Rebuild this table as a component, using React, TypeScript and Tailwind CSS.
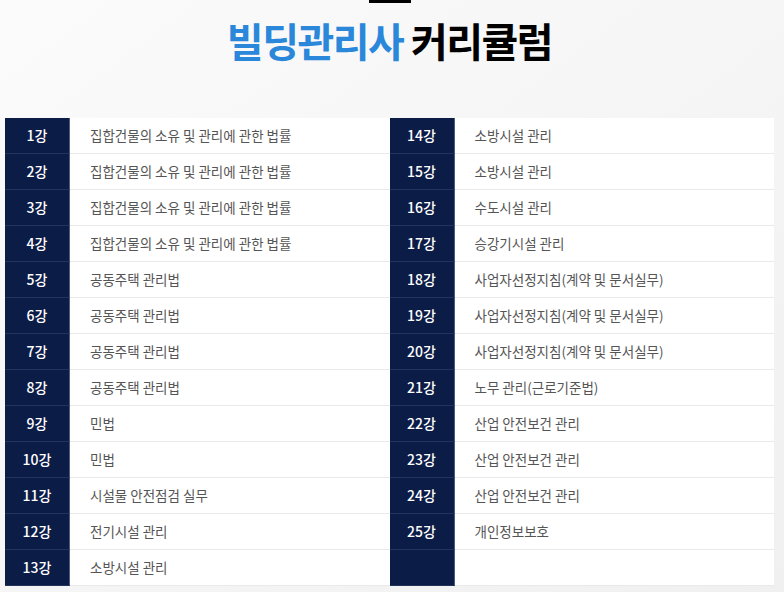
const left = [
  '집합건물의 소유 및 관리에 관한 법률',
  '집합건물의 소유 및 관리에 관한 법률',
  '집합건물의 소유 및 관리에 관한 법률',
  '집합건물의 소유 및 관리에 관한 법률',
  '공동주택 관리법',
  '공동주택 관리법',
  '공동주택 관리법',
  '공동주택 관리법',
  '민법',
  '민법',
  '시설물 안전점검 실무',
  '전기시설 관리',
  '소방시설 관리',
]

const right = [
  '소방시설 관리',
  '소방시설 관리',
  '수도시설 관리',
  '승강기시설 관리',
  '사업자선정지침(계약 및 문서실무)',
  '사업자선정지침(계약 및 문서실무)',
  '사업자선정지침(계약 및 문서실무)',
  '노무 관리(근로기준법)',
  '산업 안전보건 관리',
  '산업 안전보건 관리',
  '산업 안전보건 관리',
  '개인정보보호',
  '',
]

function Column({ items, start }: { items: string[]; start: number }) {
  return (
    <div className="flex flex-col">
      {items.map((title, i) => (
        <div key={i} className="flex h-[36px]">
          <div className="flex w-[65px] shrink-0 items-center justify-center border-r border-[#4a5c82] border-b border-b-[#22345c] bg-[#0b1c46] text-[14px] font-medium text-white">
            {title ? `${start + i}강` : ''}
          </div>
          <div className="flex flex-1 items-center border-b border-[#e9e9e9] bg-white pl-[20px] text-[13.5px] text-[#555]">
            {title}
          </div>
        </div>
      ))}
    </div>
  )
}

export default function App() {
  return (
    <div
      className="h-[592px] w-[784px] overflow-hidden bg-gradient-to-br from-[#fbfbfb] to-[#f0f0f0]"
      style={{ fontFamily: '"Noto Sans CJK KR", "Noto Sans", sans-serif' }}
    >
      <div className="ml-[5px] flex w-[769px] flex-col items-center">
        <div className="h-[3px] w-[42px] bg-black" />
        <h1 className="mt-[12px] text-[40px] font-bold leading-[50px] tracking-[-1.5px] text-black">
          <span className="text-[#2a87da]">빌딩관리사</span> 커리큘럼
        </h1>
        <div className="mt-[53px] grid w-full grid-cols-2">
          <Column items={left} start={1} />
          <Column items={right} start={14} />
        </div>
      </div>
    </div>
  )
}
